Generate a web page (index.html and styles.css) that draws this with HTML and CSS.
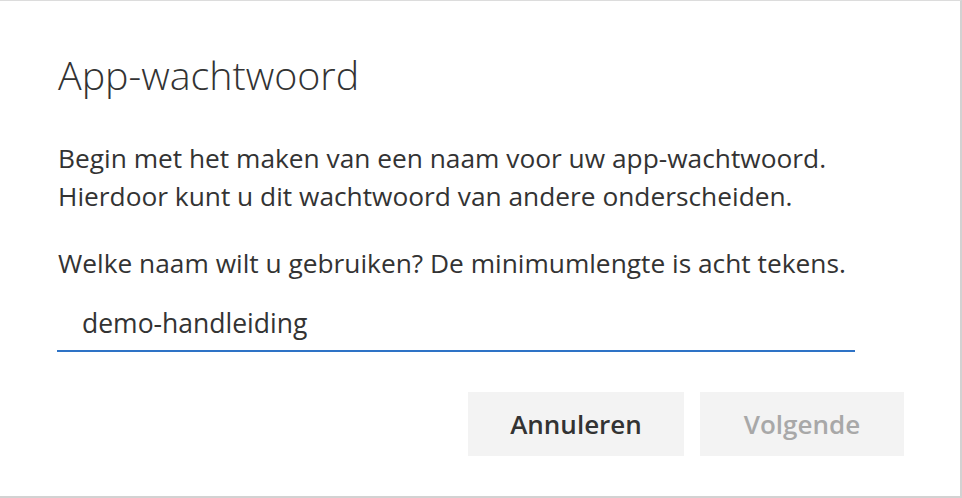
FILE: index.html
```html
<!DOCTYPE html>
<html lang="nl">
<head>
<meta charset="utf-8">
<title>App-wachtwoord</title>
<link rel="stylesheet" href="styles.css">
</head>
<body>
<div class="dialog">
  <h1 class="title">App-wachtwoord</h1>
  <p class="intro">Begin met het maken van een naam voor uw app-wachtwoord.<br>Hierdoor kunt u dit wachtwoord van andere onderscheiden.</p>
  <p class="question">Welke naam wilt u gebruiken? De minimumlengte is acht tekens.</p>
  <div class="field"><span class="field-value">demo-handleiding</span></div>
  <div class="actions">
    <button class="btn btn-cancel">Annuleren</button>
    <button class="btn btn-next">Volgende</button>
  </div>
</div>
</body>
</html>
```

FILE: styles.css
```css
html, body {
  margin: 0;
  padding: 0;
  background: #ffffff;
}
body {
  font-family: "Open Sans", "Noto Sans", sans-serif;
  color: #333333;
}
.dialog {
  box-sizing: border-box;
  width: 962px;
  height: 498px;
  border-top: 1px solid #dcdcdc;
  border-right: 2px solid #d2d2d2;
  border-bottom: 2px solid #d2d2d2;
  padding: 0 0 0 58px;
  display: flex;
  flex-direction: column;
}
.title {
  margin: 50px 0 0 0;
  font-size: 39.4px;
  font-weight: 300;
  line-height: 48px;
  color: #333333;
}
.intro {
  margin: 40px 0 0 0;
  font-size: 26.3px;
  line-height: 38px;
  white-space: nowrap;
}
.question {
  margin: 29px 0 0 0;
  font-size: 26.3px;
  line-height: 38px;
  white-space: nowrap;
}
.field {
  box-sizing: border-box;
  width: 798px;
  margin: 14px 0 0 -1px;
  padding: 0 0 0 25px;
  height: 56px;
  display: flex;
  align-items: center;
  border-bottom: 2px solid #2e73c6;
}
.field-value {
  font-size: 26.5px;
  color: #333333;
}
.actions {
  display: flex;
  gap: 16px;
  margin: 40px 0 0 410px;
}
.btn {
  font-family: inherit;
  border: none;
  background: #f3f3f3;
  height: 64px;
  font-size: 26px;
  font-weight: 600;
  padding: 0;
}
.btn-cancel {
  width: 216px;
  color: #333333;
}
.btn-next {
  width: 204px;
  color: #a8a8a8;
}
```
